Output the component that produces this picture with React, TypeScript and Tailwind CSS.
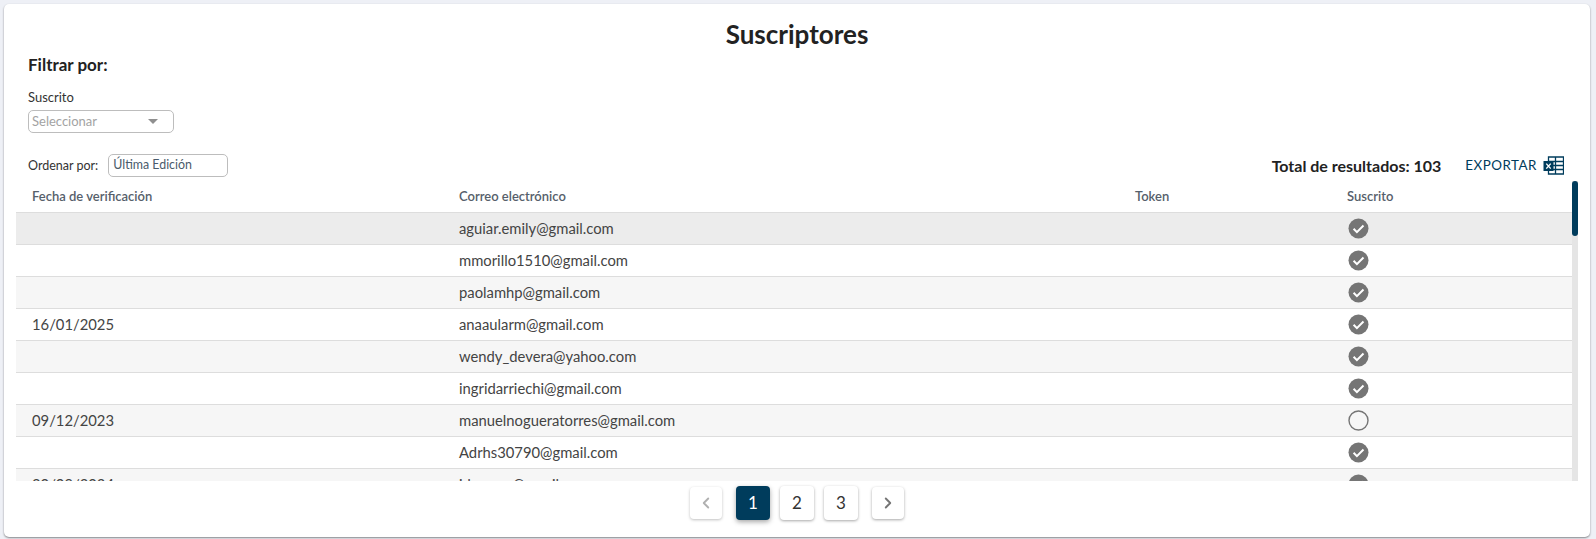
import React from 'react'
import { ChevronLeft, ChevronRight } from 'lucide-react'

interface Subscriber {
  fecha: string;
  correo: string;
  suscrito: boolean;
}

const subscribers: Subscriber[] = [
  { fecha: '', correo: 'aguiar.emily@gmail.com', suscrito: true },
  { fecha: '', correo: 'mmorillo1510@gmail.com', suscrito: true },
  { fecha: '', correo: 'paolamhp@gmail.com', suscrito: true },
  { fecha: '16/01/2025', correo: 'anaaularm@gmail.com', suscrito: true },
  { fecha: '', correo: 'wendy_devera@yahoo.com', suscrito: true },
  { fecha: '', correo: 'ingridarriechi@gmail.com', suscrito: true },
  { fecha: '09/12/2023', correo: 'manuelnogueratorres@gmail.com', suscrito: false },
  { fecha: '', correo: 'Adrhs30790@gmail.com', suscrito: true },
  { fecha: '20/09/2024', correo: 'jdmorao@gmail.com', suscrito: true },
]

const CheckIcon = ({ on }: { on: boolean }) => (
  <svg width="21" height="21" viewBox="0 0 21 21" className="block">
    {on ? (
      <>
        <circle cx="10.5" cy="10.5" r="10" fill="#757575" />
        <path d="M5.6 10.8l3.3 3.3 6.6-6.6" fill="none" stroke="#ffffff" strokeWidth="2" />
      </>
    ) : (
      <circle cx="10.5" cy="10.5" r="9.5" fill="none" stroke="#757575" strokeWidth="1.4" />
    )}
  </svg>
)

const ExcelIcon = () => (
  <svg width="21" height="19" viewBox="0 0 21 19" className="block">
    <path d="M5.5 1h15v17h-15z M5.5 5.5h15 M5.5 9.5h15 M5.5 13.5h15 M12.5 1v17" fill="none" stroke="#003c5c" strokeWidth="1.3" />
    <rect x="0.5" y="5" width="10" height="10" fill="#003c5c" />
    <path d="M3.3 7.6l4.4 5 M7.7 7.6l-4.4 5" stroke="#ffffff" strokeWidth="1.4" />
  </svg>
)

const PageButton = ({ label, active }: { label: string; active?: boolean }) => (
  <button
    className={`w-[34px] h-[34px] rounded-[4px] text-[17px] flex items-center justify-center ${
      active ? 'bg-[#003c5c] text-white shadow-[0_2px_5px_rgba(0,0,0,0.35)]' : 'bg-white text-[#333333] shadow-[0_1px_3px_rgba(0,0,0,0.35)]'
    }`}
  >
    {label}
  </button>
)

export default function App() {
  return (
    <div className="w-[1596px] h-[539px] bg-[#eef0f6] p-[4px] pr-[6px] pb-[2px] overflow-hidden font-['Lato','Inter',sans-serif]">
      <div className="h-full bg-white rounded-[5px] shadow-[0_1px_2px_rgba(0,0,0,0.45)] flex flex-col">
        <h1 className="text-[26px] leading-[30px] font-bold text-[#222222] text-center mt-[15px]">Suscriptores</h1>

        <div className="px-[24px]">
          <p className="text-[17px] leading-[18px] font-bold text-[#222222] mt-[7px]">Filtrar por:</p>
          <label className="block text-[13px] leading-[14px] text-[#333333] mt-[16px]">Suscrito</label>
          <div className="mt-[6px] w-[146px] h-[23px] border border-[#bdbdbd] rounded-[5px] flex items-center justify-between pl-[3px] pr-[15px]">
            <span className="text-[13px] text-[#a3a3a3]">Seleccionar</span>
            <span className="w-0 h-0 border-x-[5px] border-x-transparent border-t-[5px] border-t-[#8f8f8f]" />
          </div>
        </div>

        <div className="flex items-center justify-between pl-[24px] pr-[26px] mt-[20px] h-[24px]">
          <div className="flex items-center gap-[10px]">
            <span className="text-[12.5px] text-[#333333] mt-[2px]">Ordenar por:</span>
            <div className="w-[120px] h-[23px] border border-[#bdbdbd] rounded-[5px] pl-[4px] text-[12.4px] leading-[20px] text-[#4a5b6b]">Última Edición</div>
          </div>
          <div className="flex items-center pt-[1px]">
            <span className="text-[16px] font-bold text-[#222222]">Total de resultados: 103</span>
            <span className="ml-[24px] text-[13.4px] tracking-[0.5px] text-[#003c5c]">EXPORTAR</span>
            <span className="ml-[6px]"><ExcelIcon /></span>
          </div>
        </div>

        <div className="flex h-[300px] ml-[12px] mr-[12px] mt-[4px]">
          <div className="flex-1 overflow-hidden">
            <div className="grid grid-cols-[427px_692px_212px_1fr] h-[32px] pt-[1px] items-center text-[13px] font-semibold text-[#56606b] border-b border-[#dddddd]">
              <span className="pl-[16px]">Fecha de verificación</span>
              <span className="pl-[16px]">Correo electrónico</span>
              <span className="">Token</span>
              <span className="">Suscrito</span>
            </div>
            {subscribers.map((s, index) => (
              <div
                key={s.correo}
                className={`grid grid-cols-[427px_692px_212px_1fr] h-[32px] items-center text-[14.8px] text-[#444444] border-b border-[#dddddd] ${
                  index === 0 ? 'bg-[#ececec]' : index % 2 === 0 ? 'bg-[#f6f6f6]' : 'bg-white'
                }`}
              >
                <span className="pl-[16px] pb-[1px]">{s.fecha}</span>
                <span className="pl-[16px] pb-[1px]">{s.correo}</span>
                <span />
                <span className="pl-[1px]"><CheckIcon on={s.suscrito} /></span>
              </div>
            ))}
          </div>
          <div className="w-[6px] bg-[#e5e5e5]">
            <div className="h-[55px] bg-[#003c5c] rounded-[3px]" />
          </div>
        </div>

        <div className="flex items-center justify-center mt-[5px]">
          <button className="w-[32px] h-[32px] rounded-[4px] bg-white shadow-[0_1px_3px_rgba(0,0,0,0.25)] flex items-center justify-center text-[#b0b0b0]">
            <ChevronLeft size={18} strokeWidth={2.5} />
          </button>
          <div className="flex gap-[10px] mx-[14px]">
            <PageButton label="1" active />
            <PageButton label="2" />
            <PageButton label="3" />
          </div>
          <button className="w-[32px] h-[32px] rounded-[4px] bg-white shadow-[0_1px_3px_rgba(0,0,0,0.35)] flex items-center justify-center text-[#757575]">
            <ChevronRight size={18} strokeWidth={2.5} />
          </button>
        </div>
      </div>
    </div>
  )
}
